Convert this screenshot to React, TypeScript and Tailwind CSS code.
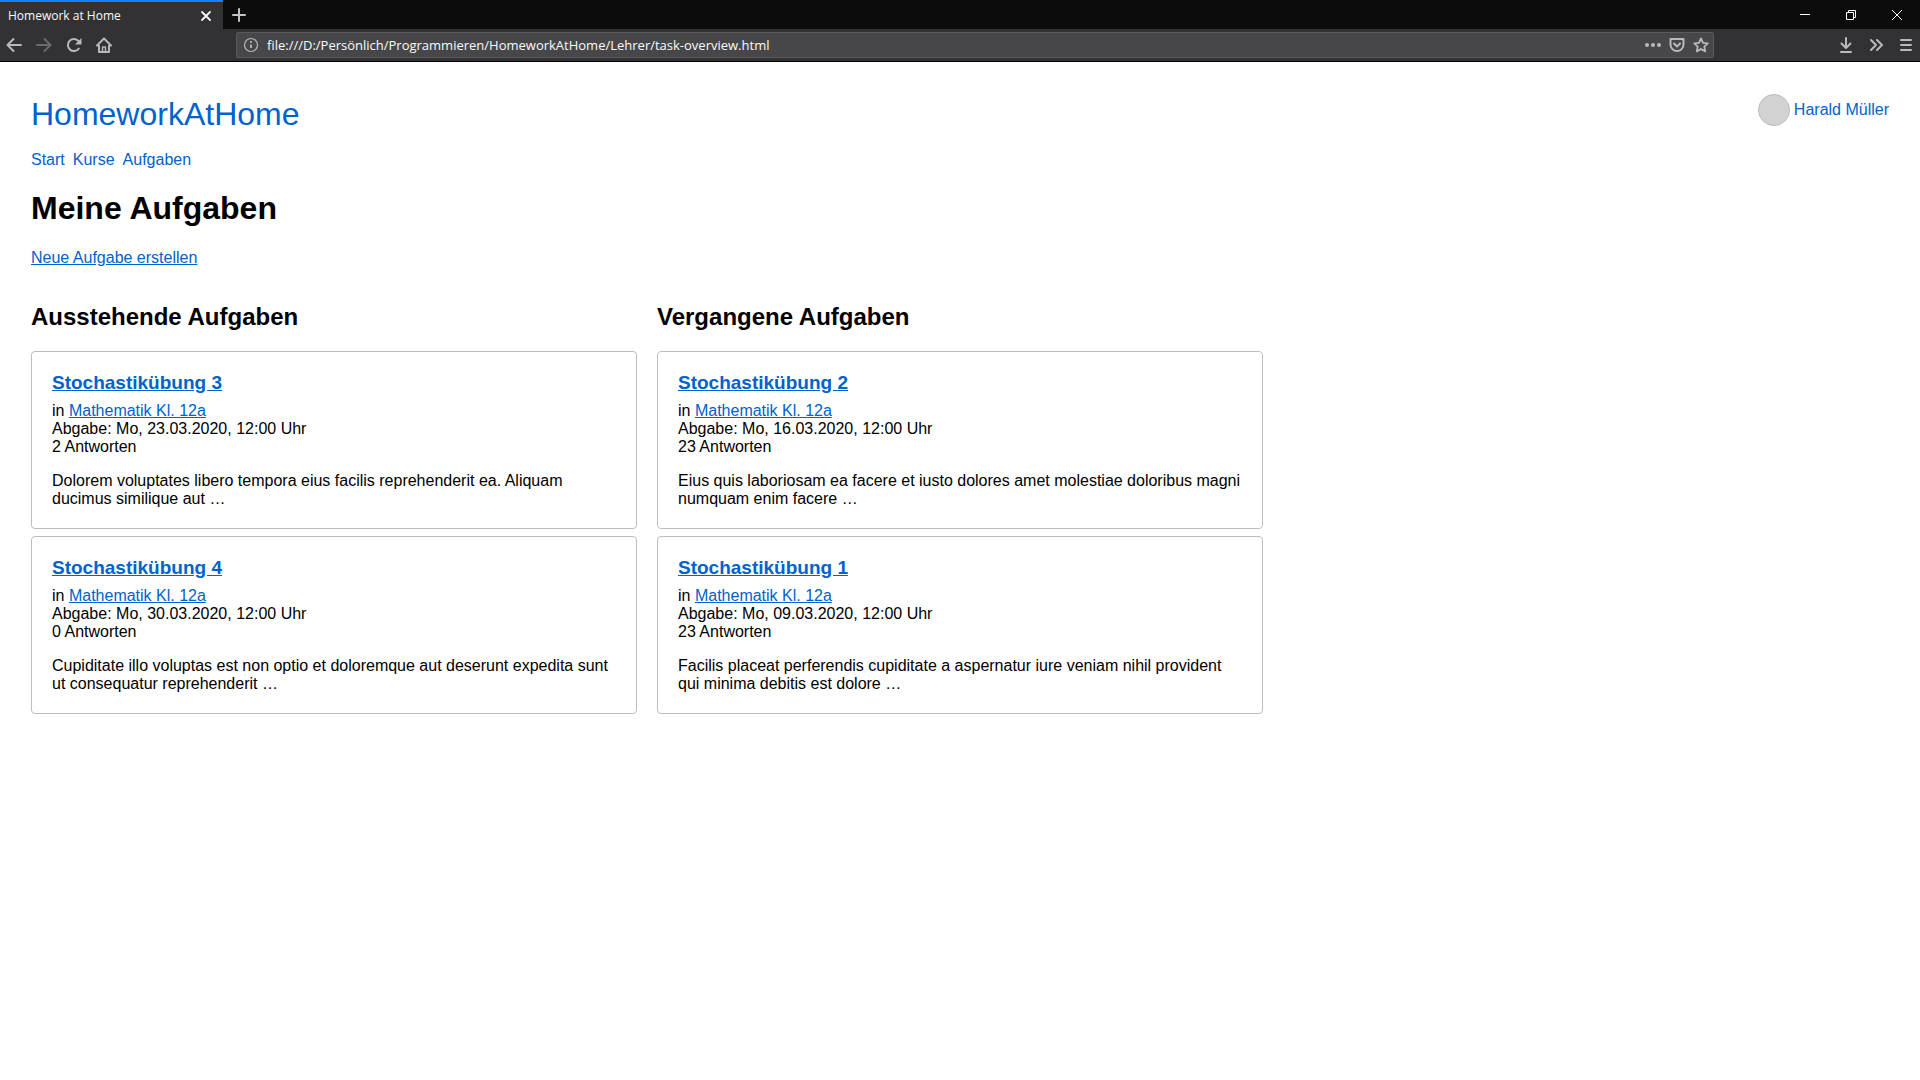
import type { ReactNode } from "react";

type Task = {
  title: string;
  course: string;
  due: string;
  answers: number;
  text: string;
};

const pending: Task[] = [
  {
    title: "Stochastikübung 3",
    course: "Mathematik Kl. 12a",
    due: "Mo, 23.03.2020, 12:00 Uhr",
    answers: 2,
    text: "Dolorem voluptates libero tempora eius facilis reprehenderit ea. Aliquam ducimus similique aut …",
  },
  {
    title: "Stochastikübung 4",
    course: "Mathematik Kl. 12a",
    due: "Mo, 30.03.2020, 12:00 Uhr",
    answers: 0,
    text: "Cupiditate illo voluptas est non optio et doloremque aut deserunt expedita sunt ut consequatur reprehenderit …",
  },
];

const past: Task[] = [
  {
    title: "Stochastikübung 2",
    course: "Mathematik Kl. 12a",
    due: "Mo, 16.03.2020, 12:00 Uhr",
    answers: 23,
    text: "Eius quis laboriosam ea facere et iusto dolores amet molestiae doloribus magni numquam enim facere …",
  },
  {
    title: "Stochastikübung 1",
    course: "Mathematik Kl. 12a",
    due: "Mo, 09.03.2020, 12:00 Uhr",
    answers: 23,
    text: "Facilis placeat perferendis cupiditate a aspernatur iure veniam nihil provident qui minima debitis est dolore …",
  },
];

function Icon({ children }: { children: ReactNode }) {
  return (
    <svg
      className="size-4 shrink-0"
      viewBox="0 0 16 16"
      fill="none"
      stroke="currentColor"
      strokeWidth="2"
      strokeLinecap="round"
      strokeLinejoin="round"
      aria-hidden="true"
    >
      {children}
    </svg>
  );
}

function IconButton({ label, children, disabled }: { label: string; children: ReactNode; disabled?: boolean }) {
  return (
    <button type="button" aria-label={label} disabled={disabled} className="shrink-0 disabled:text-[#6a6a6c]">
      <Icon>{children}</Icon>
    </button>
  );
}

function TabBar() {
  return (
    <div className="flex h-[29px] bg-[#0c0c0d] text-[#f9f9fa]">
      <div className="flex w-[223px] items-center justify-between border-t-2 border-[#0a84ff] bg-[#323234] pr-[9px] pl-2">
        <span className="text-[12px] leading-4">Homework at Home</span>
        <IconButton label="Tab schließen">
          <path d="M4 4l8 8M12 4l-8 8" strokeWidth="1.800" />
        </IconButton>
      </div>
      <button type="button" aria-label="Neuer Tab" className="flex w-8 items-center justify-center text-[#c4c4c5]">
        <Icon>
          <path d="M8 2v12M2 8h12" />
        </Icon>
      </button>
      <div className="ml-auto flex">
        <button type="button" aria-label="Minimieren" className="flex w-[46px] items-center justify-center">
          <svg className="size-4" viewBox="0 0 16 16" fill="none" stroke="currentColor">
            <path d="M3 7.5h10" />
          </svg>
        </button>
        <button type="button" aria-label="Verkleinern" className="flex w-[46px] items-center justify-center">
          <svg className="size-4" viewBox="0 0 16 16" fill="none" stroke="currentColor">
            <path d="M3.5 5.5h7v7h-7zM5.5 5.5v-2h7v7h-2" />
          </svg>
        </button>
        <button type="button" aria-label="Schließen" className="flex w-[46px] items-center justify-center">
          <svg className="size-4" viewBox="0 0 16 16" fill="none" stroke="currentColor">
            <path d="M3 3l10 10M13 3L3 13" />
          </svg>
        </button>
      </div>
    </div>
  );
}

function Toolbar() {
  return (
    <div className="flex h-[33px] items-center border-b border-black bg-[#323234] text-[#b9b9ba]">
      <div className="flex w-[236px] shrink-0 items-center gap-[14px] pl-[6px]">
        <IconButton label="Zurück">
          <path d="M15 8H1.500M7.500 2L1.500 8l6 6" />
        </IconButton>
        <IconButton label="Vor" disabled>
          <path d="M1 8h13.500M8.500 2l6 6-6 6" />
        </IconButton>
        <IconButton label="Neu laden">
          <path d="M12.800 11.500A6 6 0 1 1 12.500 4.200" />
          <path d="M15.500 1v6.500H9z" fill="currentColor" stroke="none" />
        </IconButton>
        <IconButton label="Startseite">
          <path d="M1 8.500L8 1.500l7 7M3 8.500V15h10V8.500" />
          <path d="M6.500 15v-5h3v5" strokeWidth="1.500" />
        </IconButton>
      </div>
      <div className="flex h-[26px] min-w-0 flex-1 items-center gap-2 rounded-xs border border-[#5a5a5c] bg-[#474749] pr-1 pl-[6px]">
        <IconButton label="Seiteninformationen">
          <circle cx="8" cy="8" r="6.500" strokeWidth="1.200" />
          <path d="M8 7.500v3.500" strokeWidth="1.800" strokeLinecap="butt" />
          <circle cx="8" cy="5" r="1" fill="currentColor" stroke="none" />
        </IconButton>
        <input
          type="text"
          aria-label="Adresse"
          defaultValue="file:///D:/Persönlich/Programmieren/HomeworkAtHome/Lehrer/task-overview.html"
          className="min-w-0 flex-1 bg-transparent text-[13px] leading-5 text-[#f9f9fa] outline-none"
        />
        <IconButton label="Seitenaktionen">
          <g fill="currentColor" stroke="none">
            <circle cx="2" cy="8" r="2" />
            <circle cx="8" cy="8" r="2" />
            <circle cx="14" cy="8" r="2" />
          </g>
        </IconButton>
        <IconButton label="In Pocket speichern">
          <path d="M1.500 2h13v5.500a6.500 6.500 0 0 1-13 0z" />
          <path d="M5 6.500l3 3 3-3" />
        </IconButton>
        <IconButton label="Lesezeichen">
          <path
            d="M8 1.500l2 4.300 4.800.6-3.500 3.200.9 4.800L8 12l-4.200 2.400.9-4.800L1.200 6.400l4.800-.6z"
            strokeWidth="1.800"
          />
        </IconButton>
      </div>
      <div className="flex w-[206px] shrink-0 items-center justify-end gap-[14px] pr-[6px]">
        <IconButton label="Downloads">
          <path d="M8 1v9.500M3.500 6.500L8 11l4.500-4.500M3 15h10" />
        </IconButton>
        <IconButton label="Weitere Werkzeuge">
          <path d="M3 3l5 5-5 5M9 3l5 5-5 5" />
        </IconButton>
        <IconButton label="Menü">
          <path d="M3 3h10M3 8h10M3 13h10" />
        </IconButton>
      </div>
    </div>
  );
}

function TaskCard({ task }: { task: Task }) {
  return (
    <article className="rounded border border-[#bdbdbd] p-5">
      <h3 className="mb-2 text-[19px] leading-[22px] font-bold">
        <a href="#" className="text-[#0062cc] underline">
          {task.title}
        </a>
      </h3>
      <p>
        in{" "}
        <a href="#" className="text-[#0062cc] underline">
          {task.course}
        </a>
      </p>
      <p>Abgabe: {task.due}</p>
      <p>{task.answers} Antworten</p>
      <p className="mt-4">{task.text}</p>
    </article>
  );
}

function TaskColumn({ title, tasks }: { title: string; tasks: Task[] }) {
  return (
    <section>
      <h2 className="mb-5 text-[24px] leading-7 font-bold">{title}</h2>
      <div className="flex flex-col gap-[7px]">
        {tasks.map((task) => (
          <TaskCard key={task.title} task={task} />
        ))}
      </div>
    </section>
  );
}

export default function App() {
  return (
    <div className="min-h-screen bg-white">
      <div className="font-['Open_Sans',sans-serif]">
        <TabBar />
        <Toolbar />
      </div>
      <div className="px-[31px] pt-8 font-['Liberation_Sans',Arial,sans-serif] text-[16px] leading-[18px] text-black">
        <header className="text-[#0062cc]">
          <div className="flex items-start justify-between">
            <a href="#" className="text-[32px] leading-10">
              HomeworkAtHome
            </a>
            <a href="#" className="flex items-center gap-1">
              <span className="size-8 rounded-full border border-[#bdbdbd] bg-[#d2d2d2]" />
              Harald Müller
            </a>
          </div>
          <nav className="mt-[17px] flex gap-2">
            <a href="#">Start</a>
            <a href="#">Kurse</a>
            <a href="#">Aufgaben</a>
          </nav>
        </header>
        <main>
          <h1 className="mt-[21px] text-[32px] leading-9 font-bold">Meine Aufgaben</h1>
          <p className="mt-[23px]">
            <a href="#" className="text-[#0062cc] underline">
              Neue Aufgabe erstellen
            </a>
          </p>
          <div className="mt-9 grid max-w-[1232px] grid-cols-2 gap-5">
            <TaskColumn title="Ausstehende Aufgaben" tasks={pending} />
            <TaskColumn title="Vergangene Aufgaben" tasks={past} />
          </div>
        </main>
      </div>
    </div>
  );
}
